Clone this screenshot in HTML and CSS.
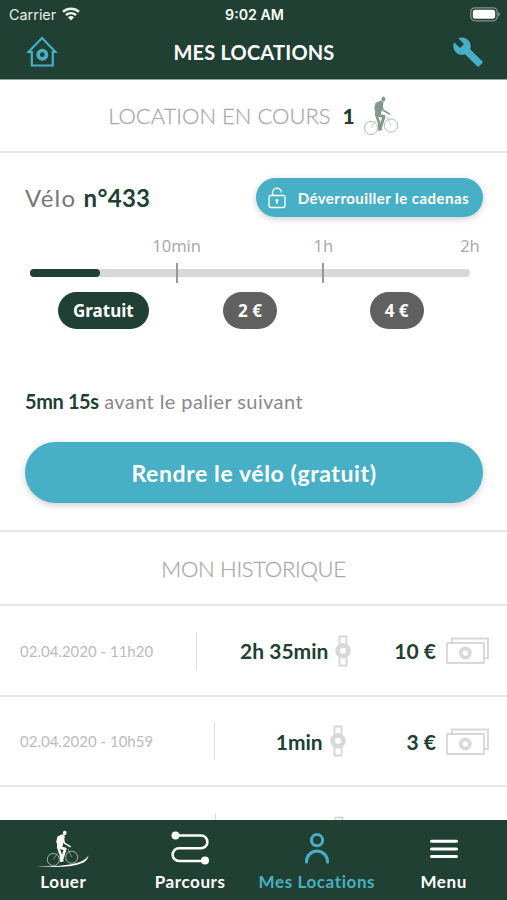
FILE: index.html
```html
<!DOCTYPE html>
<html lang="fr">
<head>
  <meta charset="UTF-8" />
  <meta name="viewport" content="width=device-width, initial-scale=1.0"/>
  <title>Mes locations</title>
  <link rel="stylesheet" href="styles.css">
</head>
<body>

<svg class="defs" width="0" height="0">
  <symbol id="cyclist" viewBox="0 0 36 40">
    <g fill="none" stroke="currentColor" stroke-width="1" opacity=".65">
      <circle cx="8" cy="32" r="6.600"/>
      <circle cx="28" cy="29.500" r="6.600"/>
      <path d="M8 32l5-7.500M24 20.500l4 9" stroke-width=".7"/>
    </g>
    <g fill="none" stroke="currentColor" stroke-linejoin="round" stroke-linecap="round">
      <path d="M14 19l7 1.500-3.800 12" stroke-width="3"/>
      <path d="M13.500 19.500l2.500 7 .7 7" stroke-width="2.600"/>
      <path d="M18.500 9.500l2 5 6 3.500" stroke-width="1.500"/>
    </g>
    <g fill="currentColor">
      <ellipse cx="20.400" cy="3" rx="2" ry="2.500"/>
      <path d="M17.800 4.500l2.700 1.500-.6 5.500-1.400 4-1 4.500-5.700-.5.400-3.500-1-3.700 1.300-5.300z"/>
      <path d="M15.500 32.500h3l1.300 1.500-4.300.4z"/>
    </g>
  </symbol>
  <symbol id="watch" viewBox="0 0 16 32">
    <g fill="none" stroke="currentColor">
      <path d="M4.500 9V1.500h7V9M4.500 22v8.500h7V22" stroke-width="1.900"/>
      <circle cx="8" cy="15.700" r="5.400" stroke-width="4.700"/>
    </g>
  </symbol>
  <symbol id="cash" viewBox="0 0 43 27">
    <g fill="none" stroke="currentColor" stroke-width="1.900">
      <rect x="1" y="6" width="37" height="20" rx=".5"/>
      <path d="M6 5.500V1.500h36V21h-3.500"/>
      <circle cx="19.300" cy="16" r="4.600" stroke-width="3.600"/>
    </g>
  </symbol>
</svg>

<header class="header">
  <div class="status">
    <div class="carrier">
      Carrier
      <svg width="18" height="14" viewBox="0 0 18 14">
        <path d="M1 4.800a12 12 0 0 1 16 0M3.900 8a8 8 0 0 1 10.200 0" fill="none" stroke="currentColor" stroke-width="2.500"/>
        <path d="M5.900 10.300a5 5 0 0 1 6.200 0L9 13.600z" fill="currentColor"/>
      </svg>
    </div>
    <div class="clock">9:02 AM</div>
    <svg class="battery" width="30" height="15" viewBox="0 0 30 15">
      <rect x=".8" y=".8" width="26.400" height="13" rx="4" fill="none" stroke="#fff" stroke-opacity=".45" stroke-width="1.200"/>
      <rect x="2.800" y="2.800" width="22.400" height="9" rx="2.300" fill="#fff"/>
      <path d="M28.300 5v4.500q1.500-.6 1.500-2.200T28.300 5z" fill="#fff" fill-opacity=".5"/>
    </svg>
  </div>
  <div class="topbar">
    <svg width="32" height="32" viewBox="0 0 32 32" fill="none" stroke="currentColor" stroke-width="2.200">
      <path d="M5.800 16H2.500L16 2l13.500 14h-3.300M5.800 15v14.500h21V15"/>
      <circle cx="16.300" cy="18.700" r="4.200" stroke-width="3.600"/>
    </svg>
    <h1>MES LOCATIONS</h1>
    <svg width="32" height="32" viewBox="0 0 24 24" fill="currentColor">
      <path d="M22.700 19l-9.100-9.100c.9-2.300.4-5-1.500-6.900-2-2-5-2.400-7.400-1.300L9 6 6 9 1.600 4.700C.4 7.100.9 10.100 2.900 12.100c1.900 1.900 4.600 2.400 6.900 1.500l9.100 9.100c.4.400 1 .4 1.400 0l2.300-2.300c.5-.4.5-1.100.1-1.400z"/>
    </svg>
  </div>
</header>

<main class="content">
  <div class="section-title">
    <h2>LOCATION EN COURS</h2>
    <span class="count">1</span>
    <svg class="rider" width="36" height="40"><use href="#cyclist"/></svg>
  </div>

  <section class="rental">
    <div class="rental-head">
      <div class="bike">Vélo <b>n°433</b></div>
      <button class="unlock">
        <svg width="18" height="22" viewBox="0 0 18 22" fill="none" stroke="currentColor" stroke-width="1.300">
          <rect x="1" y="8.500" width="16" height="12" rx="1.800"/>
          <path d="M4.500 8.500V6a4.500 4.500 0 0 1 9-.5M9 14v3"/>
          <circle cx="9" cy="13.500" r=".9" fill="currentColor"/>
        </svg>
        <span>Déverrouiller le cadenas</span>
      </button>
    </div>

    <div class="gauge">
      <div class="steps">
        <span>10min</span>
        <span>1h</span>
        <span>2h</span>
      </div>
      <div class="track">
        <div class="fill" style="width: 16%"></div>
        <i class="tick" style="left: 33.33%"></i>
        <i class="tick" style="left: 66.67%"></i>
      </div>
      <div class="prices">
        <span class="price active">Gratuit</span>
        <span class="price">2 €</span>
        <span class="price">4 €</span>
      </div>
    </div>

    <p class="remaining"><b>5mn 15s</b> <span>avant le palier suivant</span></p>
    <button class="return">Rendre le vélo (gratuit)</button>
  </section>

  <div class="section-title history-title">
    <h2>MON HISTORIQUE</h2>
  </div>

  <div class="row">
    <span class="date">02.04.2020 - 11h20</span>
    <span class="sep"></span>
    <span class="value">2h 35min <svg width="16" height="32"><use href="#watch"/></svg></span>
    <span class="value cost">10 € <svg width="43" height="27"><use href="#cash"/></svg></span>
  </div>
  <div class="row">
    <span class="date">02.04.2020 - 10h59</span>
    <span class="sep"></span>
    <span class="value">1min <svg width="16" height="32"><use href="#watch"/></svg></span>
    <span class="value cost">3 € <svg width="43" height="27"><use href="#cash"/></svg></span>
  </div>
  <div class="row loading">
    <span class="sep"></span>
    <span class="value"><svg width="16" height="32"><use href="#watch"/></svg></span>
  </div>
</main>

<nav class="tabs">
  <a class="tab">
    <svg width="54" height="40" viewBox="0 0 54 40">
      <use href="#cyclist" x="10" y="1" width="33" height="37"/>
      <path d="M0 37.500q36 0 47-6 4-2.200 5.500-5-1 5-5 7-12 6-47.500 4z" fill="currentColor"/>
    </svg>
    <span>Louer</span>
  </a>
  <a class="tab">
    <svg width="40" height="40" viewBox="0 0 40 40">
      <path d="M5 6.500h26a6.300 6.300 0 0 1 0 12.800H9a6.300 6.300 0 0 0 0 12.700h26" fill="none" stroke="currentColor" stroke-width="2.600"/>
      <circle cx="5.500" cy="6.500" r="4" fill="currentColor"/>
      <circle cx="35" cy="31.500" r="4" fill="currentColor"/>
    </svg>
    <span>Parcours</span>
  </a>
  <a class="tab active">
    <svg width="40" height="40" viewBox="0 0 40 40" fill="none" stroke="currentColor" stroke-width="3">
      <circle cx="20" cy="11.200" r="5.600"/>
      <path d="M9.500 33V32.500a10.500 10.500 0 0 1 21 0v.5" stroke-linecap="round"/>
    </svg>
    <span>Mes Locations</span>
  </a>
  <a class="tab">
    <svg width="40" height="40" viewBox="0 0 40 40" stroke="currentColor" stroke-width="3" stroke-linecap="round">
      <path d="M7.500 12.200h25M7.500 19.900h25M7.500 27.600h25"/>
    </svg>
    <span>Menu</span>
  </a>
</nav>

</body>
</html>
```

FILE: styles.css
```css
* {
  box-sizing: border-box;
}
body {
  margin: 0;
  height: 900px;
  display: flex;
  flex-direction: column;
  overflow: hidden;
  background: #fff;
  color: #1d4033;
  font-family: Lato, sans-serif;
}
.defs {
  position: absolute;
}
h1, h2, p {
  margin: 0;
}
button {
  border: none;
  background: #48b0c6;
  color: white;
  font-family: inherit;
  box-shadow: 0 2px 7px rgba(0,0,0,0.2);
}

/* header */
.header {
  height: 80px;
  flex: none;
  background: #1f4033;
  border-bottom: 1px solid #8fa79d;
  color: white;
}
.status {
  height: 28px;
  padding: 0 7px 0 9px;
  display: grid;
  grid-template-columns: 1fr auto 1fr;
  align-items: center;
  font-family: Inter, sans-serif;
  font-size: 14.400px;
}
.carrier {
  display: flex;
  align-items: center;
  gap: 6px;
  color: #e9eeec;
}
.clock {
  font-weight: 600;
  font-size: 14.200px;
}
.battery {
  justify-self: end;
}
.topbar {
  height: 48px;
  padding: 0 23px 0 26px;
  display: flex;
  align-items: center;
  justify-content: space-between;
  color: #48b0c6;
}
h1 {
  margin-right: 2px;
  font-size: 20px;
  font-weight: 700;
  letter-spacing: 0.2px;
  color: white;
}

/* sections */
.content {
  flex: 1;
  min-height: 0;
  overflow: hidden;
}
.section-title {
  height: 73px;
  display: flex;
  align-items: center;
  justify-content: center;
  border-bottom: 2px solid #e6e6e6;
}
h2 {
  font-size: 22px;
  font-weight: 300;
  color: #aaa;
  -webkit-text-stroke: 0.3px #aaa;
}
.count {
  margin: 0 8px 0 12px;
  font-size: 21px;
  font-weight: 900;
}
.rider {
  color: #84988f;
}
.history-title {
  height: 74px;
}
.history-title h2 {
  letter-spacing: -0.3px;
}

/* current rental */
.rental {
  height: 379px;
  padding: 25px 24px 0 25px;
  border-bottom: 2px solid #e6e6e6;
}
.rental-head {
  display: flex;
  align-items: center;
  justify-content: space-between;
}
.bike {
  font-size: 24px;
  letter-spacing: 1.200px;
  color: #777;
}
.bike b {
  letter-spacing: 0.3px;
  color: #1d4033;
}
.unlock {
  width: 227px;
  height: 39px;
  border-radius: 20px;
  padding: 0 14px 0 12px;
  display: flex;
  align-items: center;
  justify-content: space-between;
  font-size: 15px;
  font-weight: 700;
  letter-spacing: 0.450px;
}
.gauge {
  margin: 18px 13px 0 5px;
  font-family: "Noto Sans", sans-serif;
}
.steps, .prices {
  display: grid;
  grid-template-columns: repeat(3, 1fr);
}
.steps {
  height: 34px;
  font-size: 16.500px;
  line-height: 22px;
  color: #aaa;
}
.steps span {
  justify-self: end;
  transform: translateX(50%);
}
.track {
  position: relative;
  height: 8px;
  border-radius: 4px;
  background: #d8d8d8;
}
.fill {
  height: 8px;
  border-radius: 4px;
  background: #1f4033;
}
.tick {
  position: absolute;
  top: -6px;
  width: 2px;
  height: 20px;
  margin-left: -1px;
  background: #999;
}
.prices {
  margin-top: 15px;
  justify-items: center;
}
.price {
  height: 37px;
  padding: 0 15px;
  border-radius: 19px;
  background: #606060;
  color: white;
  font-size: 17px;
  font-weight: 700;
  line-height: 37px;
}
.price.active {
  background: #1f4033;
}
.remaining {
  margin-top: 60px;
  font-size: 20px;
  line-height: 24px;
  letter-spacing: 0.4px;
  color: #888;
}
.remaining b {
  letter-spacing: -0.4px;
  color: #1d4033;
}
.return {
  display: block;
  width: 458px;
  height: 61px;
  margin-top: 29px;
  border-radius: 31px;
  font-size: 23px;
  font-weight: 700;
  letter-spacing: 0.600px;
}

/* history */
.row {
  height: 90.500px;
  padding: 1px 18px 0 20px;
  display: flex;
  align-items: center;
  justify-content: space-between;
  border-bottom: 2px solid #e6e6e6;
}
.row.loading {
  padding-left: 215px;
  justify-content: flex-start;
  gap: 115px;
}
.date {
  font-size: 15px;
  color: #bbb;
}
.sep {
  width: 1px;
  height: 38px;
  background: #ddd;
}
.value {
  display: flex;
  align-items: center;
  gap: 7px;
  font-size: 21px;
  font-weight: 700;
}
.value svg {
  color: #d8d8d8;
}
.cost {
  gap: 10px;
}

/* bottom navigation */
.tabs {
  height: 80px;
  flex: none;
  padding: 9px 0 0;
  display: grid;
  grid-template-columns: repeat(4, 1fr);
  background: #1f4033;
}
.tab {
  display: flex;
  flex-direction: column;
  align-items: center;
  gap: 2px;
  color: white;
  font-size: 17px;
  font-weight: 700;
  line-height: 22px;
  letter-spacing: 0.600px;
  white-space: nowrap;
}
.tab.active {
  color: #48b0c6;
}
```
